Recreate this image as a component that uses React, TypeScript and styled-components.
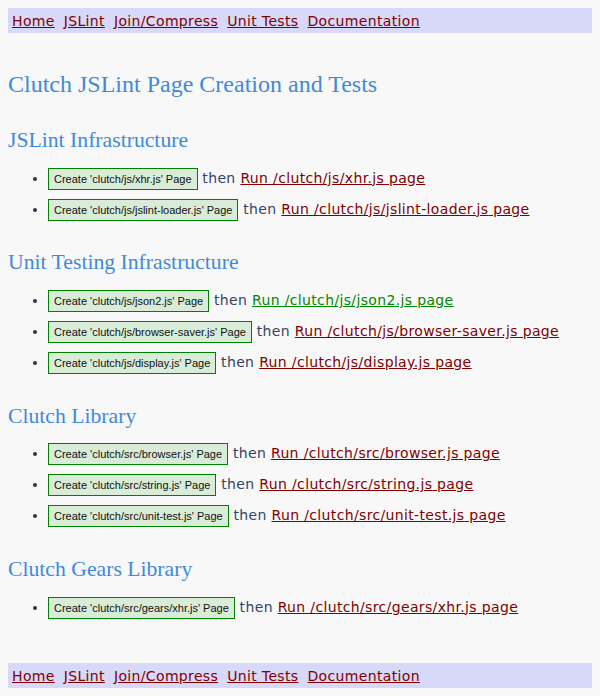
import React from "react";
import styled, { createGlobalStyle } from "styled-components";

const GlobalStyle = createGlobalStyle`
    body {
        margin: 8px;
        background: #f8f8f8;
        font-family: "DejaVu Sans", Verdana, sans-serif;
        font-size: 14px;
        letter-spacing: 0.35px;
        color: #334466;
    }
`;

type NavProps = {
    bottom?: boolean;
}

const Nav = styled.div<NavProps>`
    display: flex;
    gap: 9px;
    height: 25px;
    align-items: center;
    padding-left: 4px;
    background: #d8d8f8;
    margin-top: ${props => props.bottom ? '40.5px' : '0'};
`;

const NavLink = styled.a`
    color: #800000;
    text-decoration: underline;
`;

const Title = styled.h1`
    font-family: "Liberation Serif", "Times New Roman", serif;
    font-weight: normal;
    font-size: 24px;
    line-height: 30px;
    letter-spacing: 0;
    color: #3f8ad8;
    margin: 35.6px 0 28.6px;
`;

const SectionTitle = styled.h2`
    font-family: "Liberation Serif", "Times New Roman", serif;
    font-weight: normal;
    font-size: 21.7px;
    line-height: 26px;
    letter-spacing: 0;
    color: #3f8ad8;
    margin: 24.7px 0 9.6px;
`;

const List = styled.ul`
    margin: 0;
    padding-left: 40px;
`;

const Item = styled.li`
    height: 31px;
    line-height: 31px;
    color: #2a3450;
`;

const Then = styled.span`
    color: #334466;
`;

const CreateButton = styled.button`
    font-family: "Liberation Sans", Arial, sans-serif;
    font-size: 11px;
    letter-spacing: 0;
    height: 22px;
    padding: 0 5px;
    color: #111;
    background: #d8ecd8;
    border: 1px solid #008000;
    vertical-align: middle;
    cursor: pointer;
`;

type RunProps = {
    visited?: boolean;
}

const RunLink = styled.a<RunProps>`
    color: ${props => props.visited ? '#008800' : '#800000'};
    text-decoration: underline;
`;

type Entry = {
    file: string;
    visited?: boolean;
}

const sections: { title: string; entries: Entry[] }[] = [
    {
        title: "JSLint Infrastructure",
        entries: [{ file: "clutch/js/xhr.js" }, { file: "clutch/js/jslint-loader.js" }],
    },
    {
        title: "Unit Testing Infrastructure",
        entries: [
            { file: "clutch/js/json2.js", visited: true },
            { file: "clutch/js/browser-saver.js" },
            { file: "clutch/js/display.js" },
        ],
    },
    {
        title: "Clutch Library",
        entries: [
            { file: "clutch/src/browser.js" },
            { file: "clutch/src/string.js" },
            { file: "clutch/src/unit-test.js" },
        ],
    },
    {
        title: "Clutch Gears Library",
        entries: [{ file: "clutch/src/gears/xhr.js" }],
    },
];

const navItems = ["Home", "JSLint", "Join/Compress", "Unit Tests", "Documentation"];

const NavBar: React.FC<NavProps> = ({ bottom }) => (
    <Nav bottom={bottom}>
        {navItems.map(n => <NavLink key={n} href="#">{n}</NavLink>)}
    </Nav>
);

export default function App() {
    return (
        <>
            <GlobalStyle />
            <NavBar />
            <Title>Clutch JSLint Page Creation and Tests</Title>
            {sections.map(s => (
                <React.Fragment key={s.title}>
                    <SectionTitle>{s.title}</SectionTitle>
                    <List>
                        {s.entries.map(e => (
                            <Item key={e.file}>
                                <CreateButton>Create '{e.file}' Page</CreateButton>
                                <Then>{" then "}</Then>
                                <RunLink href="#" visited={e.visited}>Run /{e.file} page</RunLink>
                            </Item>
                        ))}
                    </List>
                </React.Fragment>
            ))}
            <NavBar bottom />
        </>
    );
}
